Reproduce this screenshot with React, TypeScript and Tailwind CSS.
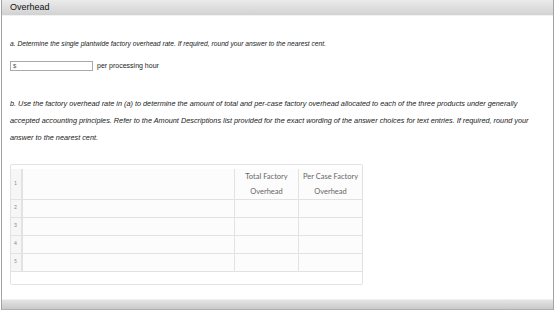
export default function App() {
  const rows = [2, 3, 4, 5];
  return (
    <div className="w-[560px] h-[319px] bg-white font-['Liberation_Sans',Arial,sans-serif] text-[#222]">
      <div className="ml-[1px] w-[553px] border-x border-[#a3a3a3]">
        {/* Header */}
        <div className="h-[16px] bg-gradient-to-b from-[#ebebeb] to-[#d2d2d2] border-b border-[#f2f2f2] pl-[8px] text-[9px] leading-[15px] text-[#111]">
          Overhead
        </div>

        {/* Body */}
        <div className="h-[283px] px-[8px] pt-[23px]">
          <p className="italic text-[6.7px] leading-[10px]">
            a. Determine the single plantwide factory overhead rate. If required, round your answer to the nearest cent.
          </p>
          <div className="mt-[12px] flex items-center gap-[4px]">
            <div className="w-[83px] h-[10px] border border-[#a9a9a9] text-[6px] leading-[8px] pl-[2px] text-[#555]">$</div>
            <span className="text-[7px]">per processing hour</span>
          </div>
          <p className="mt-[23px] italic text-[7.3px] leading-[17px] pr-[2px]">
            b. Use the factory overhead rate in (a) to determine the amount of total and per-case factory overhead allocated to each of the three products under generally accepted accounting principles. Refer to the Amount Descriptions list provided for the exact wording of the answer choices for text entries. If required, round your answer to the nearest cent.
          </p>

          {/* Table */}
          <div className="mt-[18px] w-[353px] border border-[#e3e3e3] rounded-[2px] pt-[4px] pb-[12px]">
            <div className="grid grid-cols-[12px_212px_64px_64px] font-['Lato',sans-serif] text-[#666]">
              <div className="h-[31px] bg-[#f6f6f6] border-r-2 border-b border-[#e2e2e2] flex items-center pl-[3px] text-[5px] text-[#888]">1</div>
              <div className="h-[31px] bg-[#fcfcfc] border-r border-b border-[#e2e2e2]" />
              <div className="h-[31px] bg-[#fcfcfc] border-r border-b border-[#e2e2e2] flex items-center justify-center text-center text-[7.5px] leading-[15px]">
                Total Factory<br />Overhead
              </div>
              <div className="h-[31px] bg-[#fcfcfc] border-r border-b border-[#e2e2e2] flex items-center justify-center text-center text-[7.5px] leading-[15px]">
                Per Case Factory<br />Overhead
              </div>
              {rows.map((n) => (
                <div key={n} className="contents">
                  <div className="h-[18px] bg-[#f6f6f6] border-r-2 border-b border-[#e2e2e2] flex items-center pl-[3px] text-[5px] text-[#888]">{n}</div>
                  <div className="h-[18px] bg-[#fcfcfc] border-r border-b border-[#e2e2e2]" />
                  <div className="h-[18px] bg-[#fcfcfc] border-r border-b border-[#e2e2e2]" />
                  <div className="h-[18px] bg-[#fcfcfc] border-r border-b border-[#e2e2e2]" />
                </div>
              ))}
            </div>
          </div>
        </div>

        {/* Footer */}
        <div className="h-[11px] bg-gradient-to-b from-[#e4e4e4] to-[#c9c9c9] border-t border-[#f0f0f0] border-b border-b-[#b0b0b0]" />
      </div>
    </div>
  );
}
